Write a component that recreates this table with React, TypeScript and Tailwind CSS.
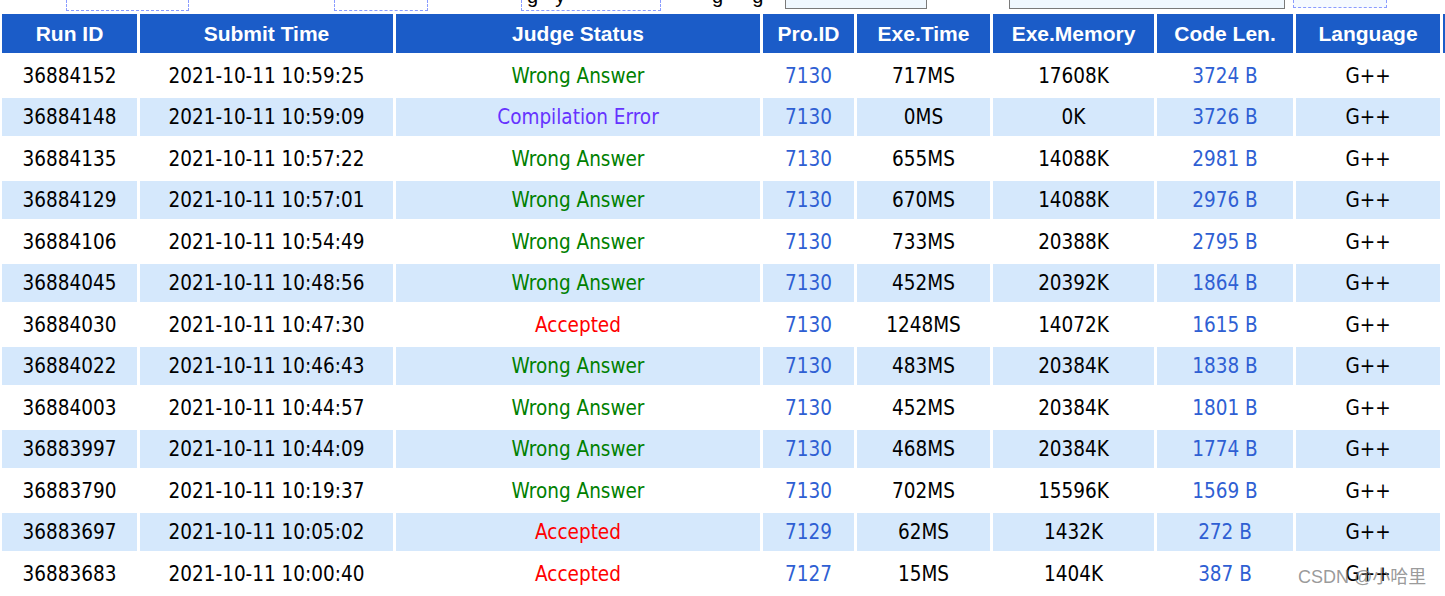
import React from 'react';

type Row = {
  id: string;
  time: string;
  status: string;
  pid: string;
  exeTime: string;
  mem: string;
  len: string;
};

const rows: Row[] = [
  { id: '36884152', time: '2021-10-11 10:59:25', status: 'Wrong Answer', pid: '7130', exeTime: '717MS', mem: '17608K', len: '3724 B' },
  { id: '36884148', time: '2021-10-11 10:59:09', status: 'Compilation Error', pid: '7130', exeTime: '0MS', mem: '0K', len: '3726 B' },
  { id: '36884135', time: '2021-10-11 10:57:22', status: 'Wrong Answer', pid: '7130', exeTime: '655MS', mem: '14088K', len: '2981 B' },
  { id: '36884129', time: '2021-10-11 10:57:01', status: 'Wrong Answer', pid: '7130', exeTime: '670MS', mem: '14088K', len: '2976 B' },
  { id: '36884106', time: '2021-10-11 10:54:49', status: 'Wrong Answer', pid: '7130', exeTime: '733MS', mem: '20388K', len: '2795 B' },
  { id: '36884045', time: '2021-10-11 10:48:56', status: 'Wrong Answer', pid: '7130', exeTime: '452MS', mem: '20392K', len: '1864 B' },
  { id: '36884030', time: '2021-10-11 10:47:30', status: 'Accepted', pid: '7130', exeTime: '1248MS', mem: '14072K', len: '1615 B' },
  { id: '36884022', time: '2021-10-11 10:46:43', status: 'Wrong Answer', pid: '7130', exeTime: '483MS', mem: '20384K', len: '1838 B' },
  { id: '36884003', time: '2021-10-11 10:44:57', status: 'Wrong Answer', pid: '7130', exeTime: '452MS', mem: '20384K', len: '1801 B' },
  { id: '36883997', time: '2021-10-11 10:44:09', status: 'Wrong Answer', pid: '7130', exeTime: '468MS', mem: '20384K', len: '1774 B' },
  { id: '36883790', time: '2021-10-11 10:19:37', status: 'Wrong Answer', pid: '7130', exeTime: '702MS', mem: '15596K', len: '1569 B' },
  { id: '36883697', time: '2021-10-11 10:05:02', status: 'Accepted', pid: '7129', exeTime: '62MS', mem: '1432K', len: '272 B' },
  { id: '36883683', time: '2021-10-11 10:00:40', status: 'Accepted', pid: '7127', exeTime: '15MS', mem: '1404K', len: '387 B' },
];

const statusColor = (s: string) => {
  if (s === 'Accepted') return 'text-[#ff0000]';
  if (s === 'Compilation Error') return 'text-[#6633ff]';
  return 'text-[#008000]';
};

const cols = 'grid grid-cols-[135px_253px_364px_91px_133px_161px_136px_144px_20px] gap-x-[3px]';

const heads = ['Run ID', 'Submit Time', 'Judge Status', 'Pro.ID', 'Exe.Time', 'Exe.Memory', 'Code Len.', 'Language'];

const App: React.FC = () => {
  return (
    <div className="w-[1445px] h-[596px] overflow-hidden bg-white relative font-['Liberation_Sans',Arial,sans-serif] text-black">
      {/* leftovers of the search form above */}
      <div className="h-[14px] flex items-start overflow-hidden">
        <div className="w-[66px] shrink-0" />
        <div className="w-[123px] h-[11px] shrink-0 border-x border-b border-dashed border-[#8a9cff]" />
        <div className="w-[145px] shrink-0" />
        <div className="w-[94px] h-[11px] shrink-0 border-x border-b border-dashed border-[#8a9cff]" />
        <div className="w-[93px] shrink-0" />
        <div className="w-[140px] h-[11px] shrink-0 border-x border-b border-dashed border-[#8a9cff] flex items-start overflow-hidden">
          <span className="ml-[5px] -mt-[14px] text-[20px] leading-[20px]">g</span>
          <span className="ml-[17px] -mt-[14px] text-[20px] leading-[20px]">y</span>
        </div>
        <div className="w-[124px] h-[14px] shrink-0 flex items-start overflow-hidden">
          <span className="ml-[51px] -mt-[14px] text-[20px] leading-[20px]">g</span>
          <span className="ml-[29px] -mt-[14px] text-[20px] leading-[20px]">g</span>
        </div>
        <div className="w-[142px] h-[9px] shrink-0 border-x border-b border-[#7a7a7a] bg-[#f0f8ff]" />
        <div className="w-[82px] shrink-0" />
        <div className="w-[276px] h-[9px] shrink-0 border-x border-b border-[#7a7a7a] bg-[#f0f8ff]" />
        <div className="w-[8px] shrink-0" />
        <div className="w-[94px] h-[8px] shrink-0 border-x border-b border-dashed border-[#8a9cff] bg-[#f5faff]" />
      </div>

      <div className="ml-[2px] flex flex-col gap-y-[3px]">
        <div className={`${cols} h-[39px]`}>
          {heads.map((h) => (
            <div key={h} className="bg-[#1b5cc8] text-white font-bold text-[21px] flex items-center justify-center">
              {h}
            </div>
          ))}
          <div className="bg-[#1b5cc8]" />
        </div>

        {rows.map((r, i) => (
          <div key={r.id} className={`${cols} h-[38.5px] text-[20.5px] font-['DejaVu_Sans_Condensed','DejaVu_Sans',sans-serif]`}>
            {[
              { v: r.id, c: '' },
              { v: r.time, c: '' },
              { v: r.status, c: statusColor(r.status) },
              { v: r.pid, c: 'text-[#2f5fd3]' },
              { v: r.exeTime, c: '' },
              { v: r.mem, c: '' },
              { v: r.len, c: 'text-[#2f5fd3]' },
              { v: 'G++', c: '' },
            ].map((cell, j) => (
              <div
                key={j}
                className={`flex items-center justify-center pt-[2px] ${i % 2 === 1 ? 'bg-[#d5e8fc]' : 'bg-white'} ${cell.c}`}
              >
                {cell.v}
              </div>
            ))}
            <div />
          </div>
        ))}
      </div>

      {/* CSDN watermark */}
      <div className="absolute left-[1298px] top-[567px] text-[18px] leading-[20px] text-[#7f7f7f]/80 font-['Liberation_Sans','Noto_Sans_CJK_SC',sans-serif] pointer-events-none">
        CSDN @小哈里
      </div>
    </div>
  );
};

export default App;
